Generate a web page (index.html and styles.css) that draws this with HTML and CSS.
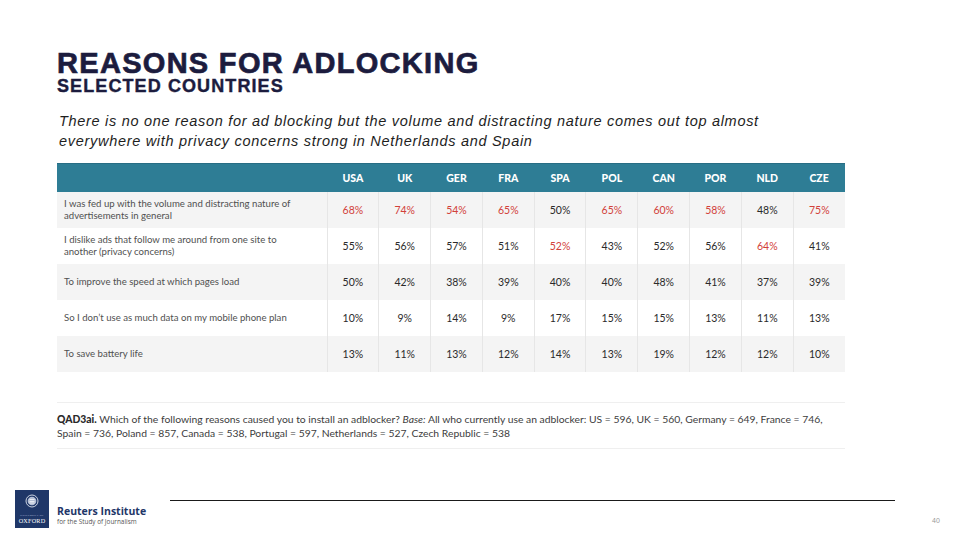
FILE: index.html
```html
<!DOCTYPE html>
<html lang="en">
<head>
<meta charset="utf-8">
<title>Reasons for adlocking</title>
<link rel="stylesheet" href="styles.css">
</head>
<body>
<div class="slide">
  <main class="content">
    <h1 class="title">REASONS FOR ADLOCKING</h1>
    <h2 class="subtitle">SELECTED COUNTRIES</h2>
    <p class="lead">There is no one reason for ad blocking but the volume and distracting nature comes out top almost everywhere with privacy concerns strong in Netherlands and Spain</p>

    <table class="data">
      <colgroup>
        <col class="c-label">
        <col class="c-val"><col class="c-val"><col class="c-val"><col class="c-val"><col class="c-val">
        <col class="c-val"><col class="c-val"><col class="c-val"><col class="c-val"><col class="c-val">
      </colgroup>
      <thead>
        <tr>
          <th></th><th>USA</th><th>UK</th><th>GER</th><th>FRA</th><th>SPA</th><th>POL</th><th>CAN</th><th>POR</th><th>NLD</th><th>CZE</th>
        </tr>
      </thead>
      <tbody>
        <tr>
          <td class="label">I was fed up with the volume and distracting nature of advertisements in general</td>
          <td class="hi">68%</td><td class="hi">74%</td><td class="hi">54%</td><td class="hi">65%</td><td>50%</td><td class="hi">65%</td><td class="hi">60%</td><td class="hi">58%</td><td>48%</td><td class="hi">75%</td>
        </tr>
        <tr>
          <td class="label">I dislike ads that follow me around from one site to another (privacy concerns)</td>
          <td>55%</td><td>56%</td><td>57%</td><td>51%</td><td class="hi">52%</td><td>43%</td><td>52%</td><td>56%</td><td class="hi">64%</td><td>41%</td>
        </tr>
        <tr>
          <td class="label">To improve the speed at which pages load</td>
          <td>50%</td><td>42%</td><td>38%</td><td>39%</td><td>40%</td><td>40%</td><td>48%</td><td>41%</td><td>37%</td><td>39%</td>
        </tr>
        <tr>
          <td class="label">So I don’t use as much data on my mobile phone plan</td>
          <td>10%</td><td>9%</td><td>14%</td><td>9%</td><td>17%</td><td>15%</td><td>15%</td><td>13%</td><td>11%</td><td>13%</td>
        </tr>
        <tr>
          <td class="label">To save battery life</td>
          <td>13%</td><td>11%</td><td>13%</td><td>12%</td><td>14%</td><td>13%</td><td>19%</td><td>12%</td><td>12%</td><td>10%</td>
        </tr>
      </tbody>
    </table>

    <p class="note"><b>QAD3ai.</b> Which of the following reasons caused you to install an adblocker? <i>Base:</i> All who currently use an adblocker: US = 596, UK = 560, Germany = 649, France = 746,<br>Spain = 736, Poland = 857, Canada = 538, Portugal = 597, Netherlands = 527, Czech Republic = 538</p>
  </main>

  <footer class="footer">
    <svg class="oxford" width="34" height="38" viewBox="0 0 34 38" aria-label="University of Oxford">
      <rect width="34" height="38" fill="#1f3768"/>
      <circle cx="17" cy="11" r="6" fill="none" stroke="#dfe4ee" stroke-width="0.9"/>
      <circle cx="17" cy="11" r="4.3" fill="#b4bfd4"/>
      <path d="M14.5 9.5h5M14.5 11.5h5M14.5 13h5" stroke="#ffffff" stroke-width="0.7"/>
      <text x="17" y="26" text-anchor="middle" class="uni">UNIVERSITY OF</text>
      <text x="17" y="33" text-anchor="middle" class="oxf">OXFORD</text>
    </svg>
    <div class="brand">
      <div class="brand-name">Reuters Institute</div>
      <div class="brand-sub">for the Study of Journalism</div>
    </div>
    <div class="rule"></div>
    <div class="page">40</div>
  </footer>
</div>
</body>
</html>
```

FILE: styles.css
```css
* { box-sizing: border-box; }

html, body {
  margin: 0;
  padding: 0;
  background: #ffffff;
}

.slide {
  width: 960px;
  height: 540px;
  overflow: hidden;
  display: flex;
  flex-direction: column;
  font-family: "Liberation Sans", Arial, sans-serif;
}

.content {
  padding: 48px 0 0 57px;
}

.title {
  margin: 0;
  font-size: 29px;
  line-height: 30px;
  font-weight: 900;
  color: #1c1c3e;
  letter-spacing: 1.3px;
  -webkit-text-stroke: 0.7px #1c1c3e;
}

.subtitle {
  margin: 0;
  font-size: 18px;
  line-height: 17px;
  font-weight: 700;
  color: #1c1c3e;
  letter-spacing: 1.1px;
  -webkit-text-stroke: 0.4px #1c1c3e;
}

.lead {
  margin: 16px 0 0 2px;
  width: 710px;
  font-size: 14.5px;
  line-height: 20px;
  font-style: italic;
  letter-spacing: 0.7px;
  color: #1e1e1e;
}

.data {
  margin-top: 12px;
  border-collapse: collapse;
  table-layout: fixed;
  width: 788px;
  font-family: Lato, "Open Sans", sans-serif;
}

.c-label { width: 270px; }
.c-val { width: 51.8px; }

.data th {
  height: 28px;
  padding: 0;
  background: #2e7d95;
  border-top: 1px solid #286d84;
  color: #ffffff;
  font-size: 10.5px;
  font-weight: 900;
  text-align: center;
  vertical-align: middle;
}

.data td {
  height: 36px;
  padding: 0;
  text-align: center;
  vertical-align: middle;
  font-size: 10.5px;
  color: #2a2a2a;
  border-left: 1px solid #e6e6e6;
}

.data tbody tr:nth-child(odd) { background: #f4f4f4; }
.data tbody tr:nth-child(even) { background: #ffffff; }

.data td.label {
  border-left: none;
  text-align: left;
  padding: 0 20px 0 7px;
  font-size: 9.6px;
  line-height: 12px;
  color: #505050;
}

.data td.hi { color: #d2413a; }

.note {
  margin: 30px 0 0 0;
  width: 788px;
  padding: 9px 0 8px 0;
  border-top: 1px solid #efefef;
  border-bottom: 1px solid #efefef;
  font-family: Lato, "Open Sans", sans-serif;
  font-size: 10.35px;
  line-height: 14px;
  color: #3d3d3d;
}

.note b { font-weight: 900; color: #2a2a2a; }
.note i { font-style: italic; }

.footer {
  margin-top: auto;
  height: 50px;
  display: flex;
  align-items: flex-start;
  padding-left: 15px;
}

.oxford { display: block; flex: none; }
.oxford .uni { font-family: "Liberation Serif", serif; font-size: 2.6px; fill: #d6dce8; letter-spacing: 0.3px; }
.oxford .oxf { font-family: "Liberation Serif", serif; font-size: 6.2px; fill: #ffffff; letter-spacing: 0.2px; }

.brand {
  margin: 15px 0 0 8px;
  width: 92px;
  flex: none;
}

.brand-name {
  font-family: "Open Sans", sans-serif;
  font-size: 10.5px;
  line-height: 12px;
  font-weight: 700;
  color: #1f3768;
}

.brand-sub {
  font-family: "Open Sans", sans-serif;
  font-size: 6.4px;
  line-height: 9px;
  color: #555555;
}

.rule {
  margin: 10px 0 0 21px;
  width: 725px;
  height: 1px;
  background: #1a1a1a;
  flex: none;
}

.page {
  margin: 27px 0 0 37px;
  font-size: 7px;
  color: #9a9a9a;
}
```
